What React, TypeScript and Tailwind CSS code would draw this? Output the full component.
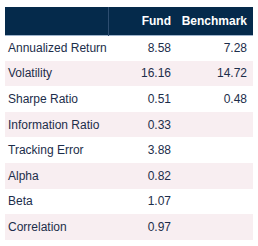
import React from "react";

const rows: [string, string, string][] = [
  ["Annualized Return", "8.58", "7.28"],
  ["Volatility", "16.16", "14.72"],
  ["Sharpe Ratio", "0.51", "0.48"],
  ["Information Ratio", "0.33", ""],
  ["Tracking Error", "3.88", ""],
  ["Alpha", "0.82", ""],
  ["Beta", "1.07", ""],
  ["Correlation", "0.97", ""],
];

export default function App() {
  return (
    <div className="w-[258px] h-[246px] bg-white pt-[7px] pl-[5px]" style={{ fontFamily: '"Liberation Sans", Arial, sans-serif' }}>
      <table className="w-[248px] table-fixed border-collapse text-[12px] text-[#1c2d4a] whitespace-nowrap">
        <colgroup>
          <col className="w-[103px]" />
          <col className="w-[69px]" />
          <col className="w-[76px]" />
        </colgroup>
        <thead>
          <tr className="h-[28px] bg-[#052a4b] text-white font-bold border-b border-[#9fb4cc]">
            <th className="border-r border-[#2d4d70]"></th>
            <th className="text-right pr-[6px]">Fund</th>
            <th className="text-right pr-[6px]">Benchmark</th>
          </tr>
        </thead>
        <tbody>
          {rows.map(([l, f, b], i) => (
            <tr key={l} className={i % 2 === 1 ? "h-[25.6px] bg-[#f8eef1]" : "h-[25.6px] bg-white"}>
              <td className="pl-[3px]">{l}</td>
              <td className="text-right pr-[6px]">{f}</td>
              <td className="text-right pr-[6px]">{b}</td>
            </tr>
          ))}
        </tbody>
      </table>
    </div>
  );
}
